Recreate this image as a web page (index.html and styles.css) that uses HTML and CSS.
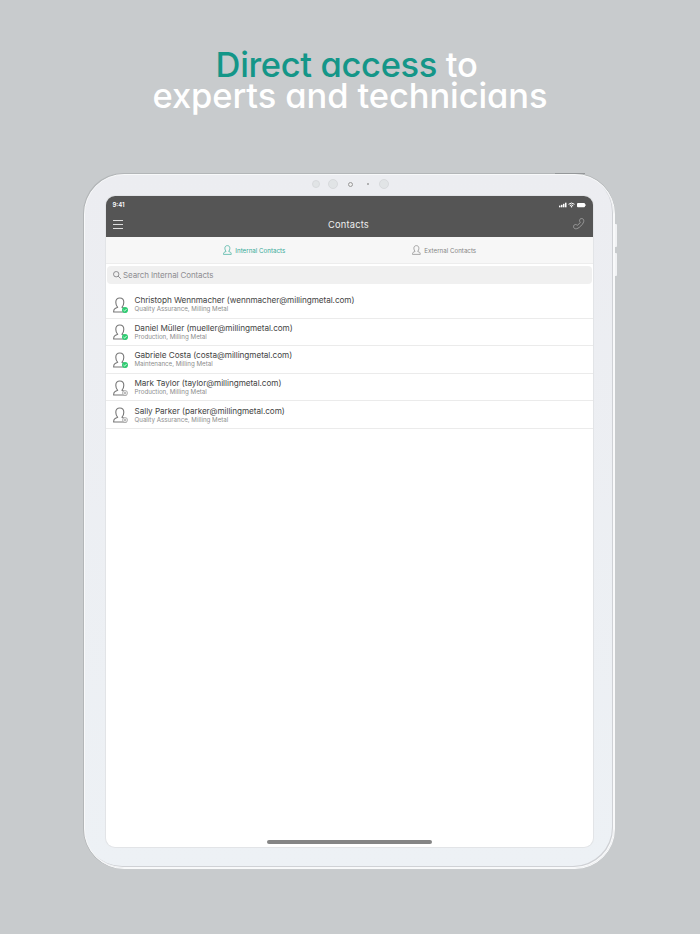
FILE: index.html
```html
<!DOCTYPE html>
<html lang="en">
<head>
  <meta charset="UTF-8" />
  <title>Contacts</title>
  <link rel="stylesheet" href="styles.css">
</head>
<body>
  <svg class="symbols" width="0" height="0">
    <symbol id="person" viewBox="0 0 14 16">
      <path d="M4.700 10.300C3.400 9 2.800 7.200 2.800 5.200C2.800 2.600 4.300 1 6.800 1s4 1.600 4 4.200c0 2-.6 3.800-1.900 5.100l2.600 1.200c1 .5 1.500 1.300 1.500 3.500H.6c0-2.200.5-3 1.500-3.500z" fill="none" stroke="currentColor" stroke-width="1.1" stroke-linejoin="round"/>
    </symbol>
  </svg>

  <h1><span class="line first"><em>Direct access</em> to</span><span class="line second">experts and technicians</span></h1>

  <div class="tablet">
    <div class="power"></div>
    <div class="volume up"></div>
    <div class="volume down"></div>
    <div class="sensors">
      <i class="small"></i><i class="big"></i><i class="ring"></i><i class="dot"></i><i class="big"></i>
    </div>

    <div class="screen">
      <header>
        <div class="status-bar">
          <span>9:41</span>
          <svg width="27" height="6" viewBox="0 0 27 6">
            <g fill="#fff">
              <rect x="0" y="3.6" width="1.5" height="1.7"/>
              <rect x="2" y="2.8" width="1.5" height="2.5"/>
              <rect x="4" y="1.8" width="1.5" height="3.5"/>
              <rect x="6" y=".7" width="1.5" height="4.6"/>
              <circle cx="12.5" cy="4.8" r=".8"/>
              <rect x="18" y=".9" width="8" height="4.400" rx="1"/>
              <rect x="26.2" y="2.300" width=".6" height="1.600"/>
            </g>
            <path d="M9.500 2.300Q12.500-.3 15.500 2.300M10.800 3.700Q12.500 2.100 14.200 3.700" fill="none" stroke="#fff" stroke-width="1"/>
          </svg>
        </div>
        <div class="nav-bar">
          <div class="menu"><b></b><b></b><b></b></div>
          <h2>Contacts</h2>
          <svg class="phone" width="12" height="12" viewBox="0 0 12 12">
            <path d="M7.400 4.200C6.300 3.400 6.200 2 7 1.200c.9-.9 2.500-.9 3.300.1 1 1.400.4 3.200-.9 4.900-1 1.300-2 2.300-3.200 3.200-1.700 1.300-3.500 1.900-4.900.9-1-.8-1-2.400-.1-3.300.8-.8 2.200-.7 3 .4C5.500 6.600 6.600 5.500 7.400 4.200z" fill="none" stroke="#aaa" stroke-width=".8"/>
          </svg>
        </div>
      </header>

      <div class="tabs">
        <div class="tab active"><svg width="9" height="10"><use href="#person"/></svg><span>Internal Contacts</span></div>
        <div class="tab"><svg width="9" height="10"><use href="#person"/></svg><span>External Contacts</span></div>
      </div>

      <div class="search">
        <svg width="8" height="8" viewBox="0 0 8 8"><circle cx="3.2" cy="3.2" r="2.7"/><path d="M5.1 5.1L7.8 7.8"/></svg>
        <span>Search Internal Contacts</span>
      </div>

      <ul class="contacts">
        <li>
          <div class="avatar online"><svg width="14" height="16"><use href="#person"/></svg><svg class="badge" width="6" height="6" viewBox="0 0 6 6"><circle cx="3" cy="3" r="3"/><path d="M1.5 3.1l1.1 1L4.6 2"/></svg></div>
          <div><p class="name">Christoph Wennmacher (wennmacher@millingmetal.com)</p><p class="role">Quality Assurance, Milling Metal</p></div>
        </li>
        <li>
          <div class="avatar online"><svg width="14" height="16"><use href="#person"/></svg><svg class="badge" width="6" height="6" viewBox="0 0 6 6"><circle cx="3" cy="3" r="3"/><path d="M1.5 3.1l1.1 1L4.6 2"/></svg></div>
          <div><p class="name">Daniel Müller (mueller@millingmetal.com)</p><p class="role">Production, Milling Metal</p></div>
        </li>
        <li>
          <div class="avatar online"><svg width="14" height="16"><use href="#person"/></svg><svg class="badge" width="6" height="6" viewBox="0 0 6 6"><circle cx="3" cy="3" r="3"/><path d="M1.5 3.1l1.1 1L4.6 2"/></svg></div>
          <div><p class="name">Gabriele Costa (costa@millingmetal.com)</p><p class="role">Maintenance, Milling Metal</p></div>
        </li>
        <li>
          <div class="avatar offline"><svg width="14" height="16"><use href="#person"/></svg><svg class="badge" width="6" height="6" viewBox="0 0 6 6"><circle cx="3" cy="3" r="2.5"/><path d="M2 2l2 2M4 2L2 4"/></svg></div>
          <div><p class="name">Mark Taylor (taylor@millingmetal.com)</p><p class="role">Production, Milling Metal</p></div>
        </li>
        <li>
          <div class="avatar offline"><svg width="14" height="16"><use href="#person"/></svg><svg class="badge" width="6" height="6" viewBox="0 0 6 6"><circle cx="3" cy="3" r="2.5"/><path d="M2 2l2 2M4 2L2 4"/></svg></div>
          <div><p class="name">Sally Parker (parker@millingmetal.com)</p><p class="role">Quality Assurance, Milling Metal</p></div>
        </li>
      </ul>

      <div class="home-bar"></div>
    </div>
  </div>
</body>
</html>
```

FILE: styles.css
```css
* {
  box-sizing: border-box;
}
body {
  margin: 0;
  height: 934px;
  overflow: hidden;
  background: #c8cbcd;
  font-family: Inter, "Liberation Sans", sans-serif;
}
.symbols {
  display: block;
}
h1 {
  margin: 0;
  padding-top: 49px;
  height: 174px;
  color: #fff;
  font-size: 34.5px;
  font-weight: 500;
  line-height: 31px;
  text-align: center;
  font-feature-settings: "cv11";
}
h1 em {
  color: #149688;
  font-style: normal;
}
.line {
  display: block;
  white-space: nowrap;
}
.first {
  letter-spacing: -0.35px;
  margin-right: 7px;
}
.second {
  letter-spacing: -0.1px;
}

/* ----- tablet ----- */
.tablet {
  position: relative;
  width: 531px;
  height: 695px;
  margin-left: 84px;
  padding: 0 22px 0 20.5px;
  border-radius: 40px;
  background: linear-gradient(#ecedf1, #edf1f5);
  border: 1px solid #f8f9fa;
  box-shadow: -0.5px -0.5px 0 0.5px #b3b6b8, inset -1px -1px 0 #f8f9fa, inset -2px -2px 0 #cfd1d5;
}
.power {
  position: absolute;
  top: -2px;
  left: 470px;
  width: 30px;
  height: 1px;
  background: #95989a;
}
.volume {
  position: absolute;
  right: -3px;
  width: 2px;
  height: 23px;
  border-radius: 0 1px 1px 0;
  background: #f1f2f4;
}
.up {
  top: 49px;
}
.down {
  top: 78px;
}
.sensors {
  display: flex;
  align-items: center;
  height: 21px;
  padding: 0 0 3px 206.5px;
}
.sensors i {
  border-radius: 50%;
  background: #e1e4e6;
  border: 1px solid #d8dadd;
}
.sensors .small {
  width: 8px;
  height: 8px;
  margin-right: 8px;
}
.sensors .big {
  width: 10px;
  height: 10px;
}
.sensors .ring {
  width: 5px;
  height: 5px;
  margin: 0 14px 0 9.5px;
  background: #eee;
  border-color: #999;
}
.sensors .dot {
  width: 2px;
  height: 2px;
  margin-right: 10.5px;
  border-color: #888;
}

/* ----- app ----- */
.screen {
  display: flex;
  flex-direction: column;
  width: 487.5px;
  height: 651px;
  border-radius: 9px;
  background: #fff;
  overflow: hidden;
  box-shadow: 0 0 0 1px #e2e4e7;
}
header {
  height: 41px;
  color: #fff;
  background: #555;
}
.status-bar {
  display: flex;
  align-items: center;
  justify-content: space-between;
  height: 17px;
  padding: 0 7px;
  font-size: 6px;
  font-weight: 600;
}
.nav-bar {
  display: grid;
  grid-template-columns: 20px 1fr 20px;
  align-items: center;
  height: 22px;
  padding: 0 8.5px 0 7px;
}
.menu {
  display: grid;
  gap: 3px;
  width: 10px;
}
.menu b {
  height: 1px;
  background: #ddd;
}
h2 {
  margin: 0;
  font-size: 9.3px;
  font-weight: 400;
  letter-spacing: 0.2px;
  text-align: center;
  color: #eee;
}
.phone {
  justify-self: end;
}
.tabs {
  display: grid;
  grid-template-columns: 190px 190px;
  justify-content: center;
  height: 27px;
  background: #f7f7f7;
  border-bottom: 1px solid #ededed;
}
.tab {
  display: flex;
  align-items: center;
  justify-content: center;
  gap: 3px;
  color: #858585;
  font-size: 6.2px;
}
.active {
  color: #35aa98;
}
.search {
  display: flex;
  align-items: center;
  gap: 2.5px;
  height: 18px;
  margin: 2px 1px 0;
  padding-left: 6px;
  border-radius: 4px;
  background: #f0f0f0;
  color: #8d8d91;
  font-size: 8px;
  letter-spacing: -0.12px;
}
.search svg {
  fill: none;
  stroke: #77777b;
  stroke-width: 0.8;
}
.contacts {
  margin: 0;
  padding: 7px 0 0;
  list-style: none;
}
.contacts li {
  display: flex;
  align-items: center;
  gap: 7px;
  height: 27.6px;
  padding: 1px 0 0 7px;
  border-bottom: 1px solid #ebebeb;
}
.avatar {
  position: relative;
  width: 15px;
  height: 16px;
  color: #777;
}
.avatar svg {
  display: block;
}
.avatar .badge {
  position: absolute;
  right: 0;
  bottom: 0;
}
.badge path {
  fill: none;
  stroke: #fff;
  stroke-width: 0.8;
}
.online .badge circle {
  fill: #2ecc71;
}
.offline .badge circle {
  fill: #eee;
  stroke: #999;
  stroke-width: 0.7;
}
.offline .badge path {
  stroke: #999;
  stroke-width: 0.6;
}
.contacts p {
  margin: 0;
  white-space: nowrap;
}
.name {
  color: #444;
  font-size: 8.2px;
  line-height: 9px;
  letter-spacing: -0.06px;
}
.role {
  color: #8c8c8c;
  font-size: 6.2px;
  line-height: 8px;
}
.home-bar {
  width: 165px;
  height: 4px;
  margin: auto auto 3px 161px;
  border-radius: 2px;
  background: #858585;
}
```
